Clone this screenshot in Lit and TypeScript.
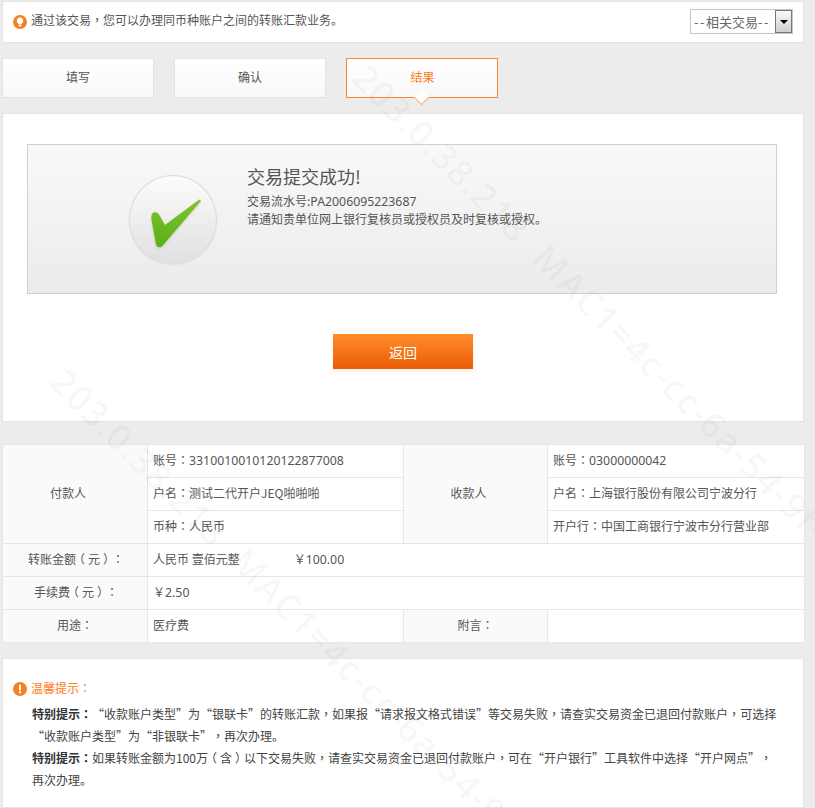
import { LitElement, html, css } from "lit";
import { customElement } from "lit/decorators.js";

@customElement("app-root")
export class AppRoot extends LitElement {
  static styles = css`
    :host {
      display: block;
      position: relative;
      width: 815px;
      height: 808px;
      overflow: hidden;
      background: #ececec;
      color: #555;
      font: 12px/18px "Noto Sans CJK SC", "Noto Sans", sans-serif;
      text-spacing-trim: space-all;
    }
    .page { display: flex; flex-direction: column; width: 802px; margin-left: 2px; padding-top: 1px; }
    .panel { background: #fff; box-sizing: border-box; border: 1px solid #e3e3e3; border-top-color: #e6e6e6; }
    .c { font-family: "Noto Sans CJK TC", "Noto Sans CJK SC", sans-serif; line-height: 0; }
    .fp { display: inline-block; width: 12px; text-align: center; font-feature-settings: "halt"; }
    .top { height: 42px; display: flex; align-items: center; padding: 0 10px; }
    .top .icon { flex: none; margin-right: 4px; }
    .top .msg { flex: 1; margin-top: -4px; }
    .select { display: flex; width: 103px; height: 25px; box-sizing: border-box; border: 1px solid #c6c6c6; margin-top: -1px; color: #666; }
    .select .val { flex: 1; font-size: 13px; line-height: 23px; padding-left: 3px; white-space: nowrap; }
    .select .d { letter-spacing: 1.5px; }
    .select .btn { width: 17px; box-sizing: border-box; border: 1px solid #777; background: linear-gradient(#fafafa, #cfcfcf); display: flex; align-items: center; justify-content: center; }
    .select .btn i { width: 0; height: 0; border: 4px solid transparent; border-top: 4px solid #000; border-bottom: 0; }
    .tabs { display: flex; gap: 20px; margin-top: 15px; }
    .tab { position: relative; width: 152px; height: 40px; box-sizing: border-box; border: 1px solid #e3e3e3; background: linear-gradient(#fff, #f8f8f8); display: flex; align-items: center; justify-content: center; padding-bottom: 2px; color: #555; }
    .tab.on { border-color: #ff8438; color: #ff7a20; padding-left: 1px; }
    .tab.on::after { content: ""; position: absolute; left: 69px; bottom: -6px; width: 11px; height: 11px; background: #fff; border-right: 1px solid #ffa86f; border-bottom: 1px solid #ffa86f; transform: rotate(45deg); box-sizing: border-box; }
    .main { margin-top: 15px; height: 309px; padding: 30px 25px 0 24px; }
    .result { height: 150px; box-sizing: border-box; margin-right: 1px; border: 1px solid #cfcfcf; background: linear-gradient(#f9f9f9, #ebebeb); display: flex; align-items: flex-start; padding: 18px 0 0 101px; }
    .ball { flex: none; width: 88px; height: 89px; margin: 12px 30px 0 0; border-radius: 50%; border: 1px solid #dcdcdc; box-sizing: border-box; background: linear-gradient(#fcfcfc, #e0e0e0); box-shadow: 0 1px 2px rgba(0,0,0,.08); display: flex; align-items: center; justify-content: center; }
    .ball svg { filter: drop-shadow(0 1px 1px rgba(90,130,30,.3)); }
    .result h2 { margin: 0 0 3px; font-size: 18px; line-height: 26px; font-weight: 400; color: #555; }
    .num { font-family: "Noto Sans", sans-serif; font-size: 12.3px; line-height: 0; }
    .actions { display: flex; justify-content: center; margin-top: 40px; padding-left: 1px; }
    .back { width: 140px; height: 35px; border: 0; padding: 0; background: linear-gradient(#ff8d2b, #eb5c05); color: #fff; font: inherit; font-size: 14px; box-shadow: 0 3px 4px rgba(235,92,5,.08); }
    table { margin-top: 22px; border-collapse: collapse; table-layout: fixed; width: 802px; background: #fff; }
    td { height: 33px; box-sizing: border-box; border: 1px solid #e6e6e6; padding: 0 5px 2px; white-space: nowrap; }
    td.l { background: #fafafa; text-align: center; padding: 0 0 2px; }
    td.who { padding-right: 14px; }
    td.fee { padding-left: 2px; }
    .gap { display: inline-block; width: 54px; }
    .notice { margin-top: 15px; height: 150px; padding: 18px 10px 0 10px; line-height: 22px; color: #444; }
    .notice .title { display: flex; align-items: center; color: #ff7a20; gap: 4px; }
    .notice .title svg { flex: none; margin-top: 2px; }
    .notice p { margin: 4px 0 0 19px; }
    .notice p + p { margin-top: 0; }
    .notice b { font-weight: 700; color: #333; }
    .wm { position: absolute; left: 0; top: 0; white-space: nowrap; pointer-events: none; font: 600 36px/40px "Noto Sans", sans-serif; letter-spacing: 1.5px; color: rgba(0,0,0,.032); transform-origin: 0 0; transform: translate(var(--x), var(--y)) rotate(45deg); }
  `;

  private c(t: string) {
    return html`<span class="c">${t}</span>`;
  }

  render() {
    const colon = this.c("：");
    const comma = this.c("，");
    const lp = html`<span class="fp">（</span>`;
    const rp = html`<span class="fp">）</span>`;
    return html`
      <div class="page">
        <div class="panel top">
          <svg class="icon" width="14" height="14" viewBox="0 0 14 14"><circle cx="7" cy="7" r="7" fill="#f58220"/><path d="M7 2.600a3.200 3.200 0 0 0-1.900 5.800c.4.3.5.6.5 1h2.800c0-.4.1-.7.5-1A3.200 3.200 0 0 0 7 2.600z" fill="#fff"/><rect x="5.800" y="10" width="2.400" height="1.400" fill="#fff"/></svg>
          <span class="msg">通过该交易${comma}您可以办理同币种账户之间的转账汇款业务。</span>
          <div class="select"><span class="val"><span class="d">--</span>相关交易<span class="d">--</span></span><span class="btn"><i></i></span></div>
        </div>
        <div class="tabs">
          <div class="tab">填写</div>
          <div class="tab">确认</div>
          <div class="tab on">结果</div>
        </div>
        <div class="panel main">
          <div class="result">
            <div class="ball">
              <svg width="60" height="60" viewBox="0 0 60 60"><defs><linearGradient id="g" x1="0" y1="0" x2="0" y2="1"><stop offset="0" stop-color="#7dc52e"/><stop offset="1" stop-color="#5cae17"/></linearGradient></defs><path d="M56 9.800C57.500 9.300 58.200 10.600 57.200 11.800L20.500 54.500C18.500 57.800 14 58 13 54.500L8.400 29C7.800 24.500 10 22.300 12 22.300C14 22.300 15.500 23.500 16.500 25.500L22 35Z" fill="url(#g)"/></svg>
            </div>
            <div>
              <h2>交易提交成功!</h2>
              <div>交易流水号:<span class="num">PA2006095223687</span></div>
              <div>请通知贵单位网上银行复核员或授权员及时复核或授权。</div>
            </div>
          </div>
          <div class="actions"><button class="back">返回</button></div>
        </div>
        <table>
          <colgroup><col style="width:145px"><col style="width:256px"><col style="width:144px"><col style="width:257px"></colgroup>
          <tr><td class="l who" rowspan="3">付款人</td><td>账号${colon}<span class="num">3310010010120122877008</span></td><td class="l who" rowspan="3">收款人</td><td>账号${colon}<span class="num">03000000042</span></td></tr>
          <tr><td>户名${colon}测试二代开户JEQ啪啪啪</td><td>户名${colon}上海银行股份有限公司宁波分行</td></tr>
          <tr><td>币种${colon}人民币</td><td>开户行${colon}中国工商银行宁波市分行营业部</td></tr>
          <tr><td class="l fee">转账金额${lp}元${rp}${colon}</td><td colspan="3">人民币 壹佰元整<span class="gap"></span>￥<span class="num">100.00</span></td></tr>
          <tr><td class="l fee">手续费${lp}元${rp}${colon}</td><td colspan="3">￥<span class="num">2.50</span></td></tr>
          <tr><td class="l">用途${colon}</td><td>医疗费</td><td class="l">附言${colon}</td><td></td></tr>
        </table>
        <div class="panel notice">
          <div class="title"><svg width="14" height="14" viewBox="0 0 14 14"><circle cx="7" cy="7" r="7" fill="#f58220"/><rect x="6" y="2.800" width="2" height="5.500" fill="#fff"/><rect x="6" y="9.300" width="2" height="2" fill="#fff"/></svg><span>温馨提示${colon}</span></div>
          <p><b>特别提示${colon}</b>“收款账户类型”为“银联卡”的转账汇款${comma}如果报“请求报文格式错误”等交易失败${comma}请查实交易资金已退回付款账户${comma}可选择<br>“收款账户类型”为“非银联卡”${comma}再次办理。</p>
          <p><b>特别提示${colon}</b>如果转账金额为100万${lp}含${rp}以下交易失败${comma}请查实交易资金已退回付款账户${comma}可在“开户银行”工具软件中选择“开户网点”${comma}<br>再次办理。</p>
        </div>
      </div>
      <div class="wm" style="--x:373px;--y:57px">203.0.38.218 &nbsp;MAC1=4c-cc-6a-54-9f-0d</div>
      <div class="wm" style="--x:71px;--y:361px">203.0.38.218 &nbsp;MAC1=4c-cc-6a-54-9f-0d</div>
    `;
  }
}
